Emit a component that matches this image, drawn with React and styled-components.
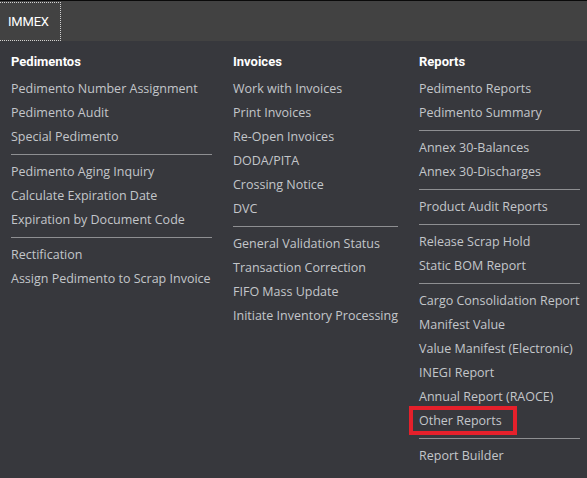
import React from 'react';
import styled, { createGlobalStyle } from 'styled-components';

const GlobalStyle = createGlobalStyle`
	html, body {
		margin: 0;
		padding: 0;
		background: #37383d;
	}
	body {
		font-family: 'Open Sans', 'Noto Sans', sans-serif;
	}
`;

const menu = [
	{
		title: 'Pedimentos',
		width: 201,
		groups: [
			['Pedimento Number Assignment', 'Pedimento Audit', 'Special Pedimento'],
			['Pedimento Aging Inquiry', 'Calculate Expiration Date', 'Expiration by Document Code'],
			['Rectification', 'Assign Pedimento to Scrap Invoice'],
		],
	},
	{
		title: 'Invoices',
		width: 165,
		groups: [
			['Work with Invoices', 'Print Invoices', 'Re-Open Invoices', 'DODA/PITA', 'Crossing Notice', 'DVC'],
			['General Validation Status', 'Transaction Correction', 'FIFO Mass Update', 'Initiate Inventory Processing'],
		],
	},
	{
		title: 'Reports',
		width: 161,
		groups: [
			['Pedimento Reports', 'Pedimento Summary'],
			['Annex 30-Balances', 'Annex 30-Discharges'],
			['Product Audit Reports'],
			['Release Scrap Hold', 'Static BOM Report'],
			[
				'Cargo Consolidation Report',
				'Manifest Value',
				'Value Manifest (Electronic)',
				'INEGI Report',
				'Annual Report (RAOCE)',
				'Other Reports',
			],
			['Report Builder'],
		],
	},
];

export default function App() {
	return (
		<Page>
			<GlobalStyle />
			<TopBar>
				<Tab>IMMEX</Tab>
			</TopBar>
			<MegaMenu>
				{menu.map((col) => (
					<Column key={col.title} $width={col.width}>
						<Heading>{col.title}</Heading>
						{col.groups.map((group, gi) => (
							<React.Fragment key={gi}>
								{gi > 0 && <Divider />}
								{group.map((item) => (
									<Item key={item} $marked={item === 'Other Reports'}>
										{item}
									</Item>
								))}
							</React.Fragment>
						))}
					</Column>
				))}
			</MegaMenu>
		</Page>
	);
}

const Page = styled.div`
	width: 587px;
	height: 478px;
	overflow: hidden;
	background: #37383d;
`;
const TopBar = styled.div`
	height: 40px;
	border-top: 1px solid #0a0a0a;
	background-color: #424242;
	display: flex;
	align-items: stretch;
`;
const Tab = styled.div`
	display: flex;
	align-items: center;
	padding: 0 11px 0 8px;
	margin-top: 1px;
	border: 1px dotted #d0d0d0;
	border-left: none;
	color: #ffffff;
	font-family: Roboto, 'Liberation Sans', sans-serif;
	font-size: 13px;
	letter-spacing: -0.2px;
`;
const MegaMenu = styled.div`
	display: flex;
	gap: 21px;
	padding: 9px 0 0 11px;
`;
const Column = styled.div`
	width: ${(p) => p.$width}px;
	display: flex;
	flex-direction: column;
`;
const Heading = styled.div`
	height: 24px;
	line-height: 24px;
	margin-bottom: 3px;
	color: #ffffff;
	font-family: Roboto, 'Liberation Sans', sans-serif;
	font-weight: 700;
	font-size: 13px;
`;
const Item = styled.div`
	position: relative;
	height: 24px;
	line-height: 24px;
	color: #c3c6ca;
	font-size: 12.5px;
	white-space: nowrap;
	cursor: pointer;
	&::after {
		content: '';
		display: ${(p) => (p.$marked ? 'block' : 'none')};
		position: absolute;
		left: -10px;
		top: -3px;
		width: 108px;
		height: 29px;
		box-sizing: border-box;
		border: 4px solid #e5202b;
	}
	&:hover {
		color: #ffffff;
	}
`;
const Divider = styled.div`
	height: 1px;
	margin: 5px 0;
	background-color: #8e8f92;
`;
